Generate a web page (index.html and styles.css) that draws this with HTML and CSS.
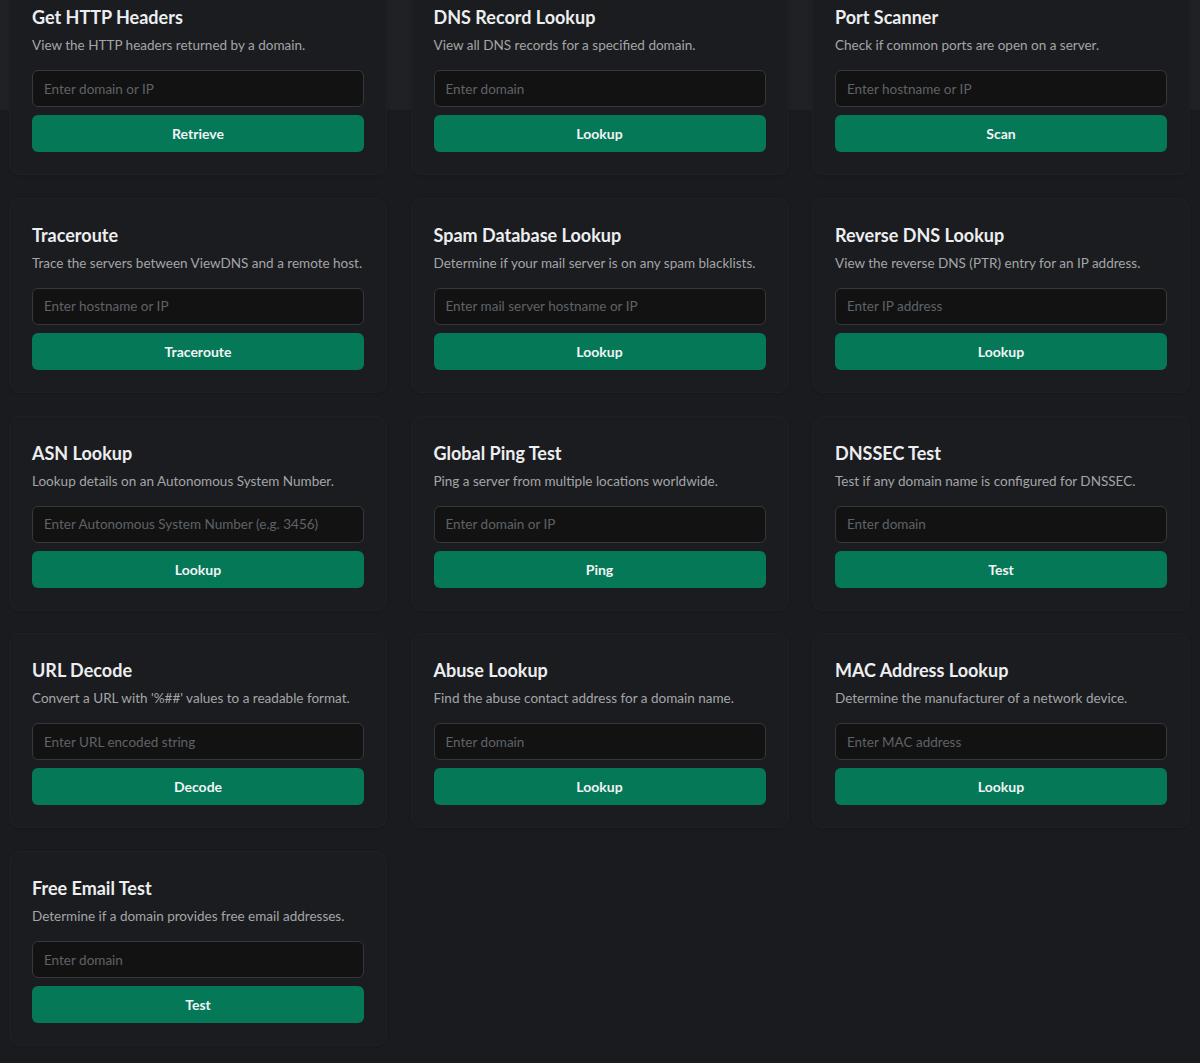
FILE: index.html
```html
<!DOCTYPE html>
<html lang="en">
<head>
<meta charset="utf-8">
<title>Tools</title>
<link rel="stylesheet" href="styles.css">
</head>
<body>
<main class="page">
  <section class="tools">
    <div class="card"><h3 class="card-title">Get HTTP Headers</h3><p class="card-desc">View the HTTP headers returned by a domain.</p><input class="field" placeholder="Enter domain or IP"><button class="btn">Retrieve</button></div>
    <div class="card"><h3 class="card-title">DNS Record Lookup</h3><p class="card-desc">View all DNS records for a specified domain.</p><input class="field" placeholder="Enter domain"><button class="btn">Lookup</button></div>
    <div class="card"><h3 class="card-title">Port Scanner</h3><p class="card-desc">Check if common ports are open on a server.</p><input class="field" placeholder="Enter hostname or IP"><button class="btn">Scan</button></div>

    <div class="card"><h3 class="card-title">Traceroute</h3><p class="card-desc">Trace the servers between ViewDNS and a remote host.</p><input class="field" placeholder="Enter hostname or IP"><button class="btn">Traceroute</button></div>
    <div class="card"><h3 class="card-title">Spam Database Lookup</h3><p class="card-desc">Determine if your mail server is on any spam blacklists.</p><input class="field" placeholder="Enter mail server hostname or IP"><button class="btn">Lookup</button></div>
    <div class="card"><h3 class="card-title">Reverse DNS Lookup</h3><p class="card-desc">View the reverse DNS (PTR) entry for an IP address.</p><input class="field" placeholder="Enter IP address"><button class="btn">Lookup</button></div>

    <div class="card"><h3 class="card-title">ASN Lookup</h3><p class="card-desc">Lookup details on an Autonomous System Number.</p><input class="field" placeholder="Enter Autonomous System Number (e.g. 3456)"><button class="btn">Lookup</button></div>
    <div class="card"><h3 class="card-title">Global Ping Test</h3><p class="card-desc">Ping a server from multiple locations worldwide.</p><input class="field" placeholder="Enter domain or IP"><button class="btn">Ping</button></div>
    <div class="card"><h3 class="card-title">DNSSEC Test</h3><p class="card-desc">Test if any domain name is configured for DNSSEC.</p><input class="field" placeholder="Enter domain"><button class="btn">Test</button></div>

    <div class="card"><h3 class="card-title">URL Decode</h3><p class="card-desc">Convert a URL with '%##' values to a readable format.</p><input class="field" placeholder="Enter URL encoded string"><button class="btn">Decode</button></div>
    <div class="card"><h3 class="card-title">Abuse Lookup</h3><p class="card-desc">Find the abuse contact address for a domain name.</p><input class="field" placeholder="Enter domain"><button class="btn">Lookup</button></div>
    <div class="card"><h3 class="card-title">MAC Address Lookup</h3><p class="card-desc">Determine the manufacturer of a network device.</p><input class="field" placeholder="Enter MAC address"><button class="btn">Lookup</button></div>

    <div class="card"><h3 class="card-title">Free Email Test</h3><p class="card-desc">Determine if a domain provides free email addresses.</p><input class="field" placeholder="Enter domain"><button class="btn">Test</button></div>
  </section>
</main>
</body>
</html>
```
FILE: styles.css
```css
* { box-sizing: border-box; }
html, body { margin: 0; padding: 0; }
body {
  background: linear-gradient(#202124 0, #202124 110px, #1a1b1e 110px) no-repeat, #1a1b1e;
  color: #e9ecef;
  font-family: Lato, "Noto Sans", "Liberation Sans", sans-serif;
  min-height: 1063px;
}
.page {
  padding: 0 10px 16px 9px;
}
.tools {
  display: grid;
  grid-template-columns: repeat(3, 378px);
  column-gap: 23.5px;
  row-gap: 22.75px;
  margin-top: -20px;
}
.card {
  display: flex;
  flex-direction: column;
  background: #1b1c1f;
  border: 1px solid #1f2023;
  border-radius: 10px;
  padding: 25px 22px 22px;
  box-shadow: 0 1px 3px rgba(0,0,0,0.15);
}
.card-title {
  margin: 0;
  font-size: 18px;
  line-height: 22px;
  font-weight: 700;
  color: #eceef0;
  white-space: nowrap;
}
.card-desc {
  margin: 7px 0 15px;
  font-size: 13.5px;
  line-height: 20px;
  color: #a3a5a8;
  white-space: nowrap;
}
.field {
  height: 37px;
  width: 100%;
  background: #121213;
  border: 1px solid #36373a;
  border-radius: 6px;
  padding: 0 11px;
  font-family: inherit;
  font-size: 13.5px;
  color: #e9ecef;
  outline: none;
}
.field::placeholder { color: #5f6266; }
.btn {
  margin-top: 8px;
  height: 37px;
  width: 100%;
  border: none;
  border-radius: 6px;
  background: #047857;
  color: #f1f3f5;
  font-family: inherit;
  font-size: 14px;
  font-weight: 700;
  cursor: pointer;
}
```
